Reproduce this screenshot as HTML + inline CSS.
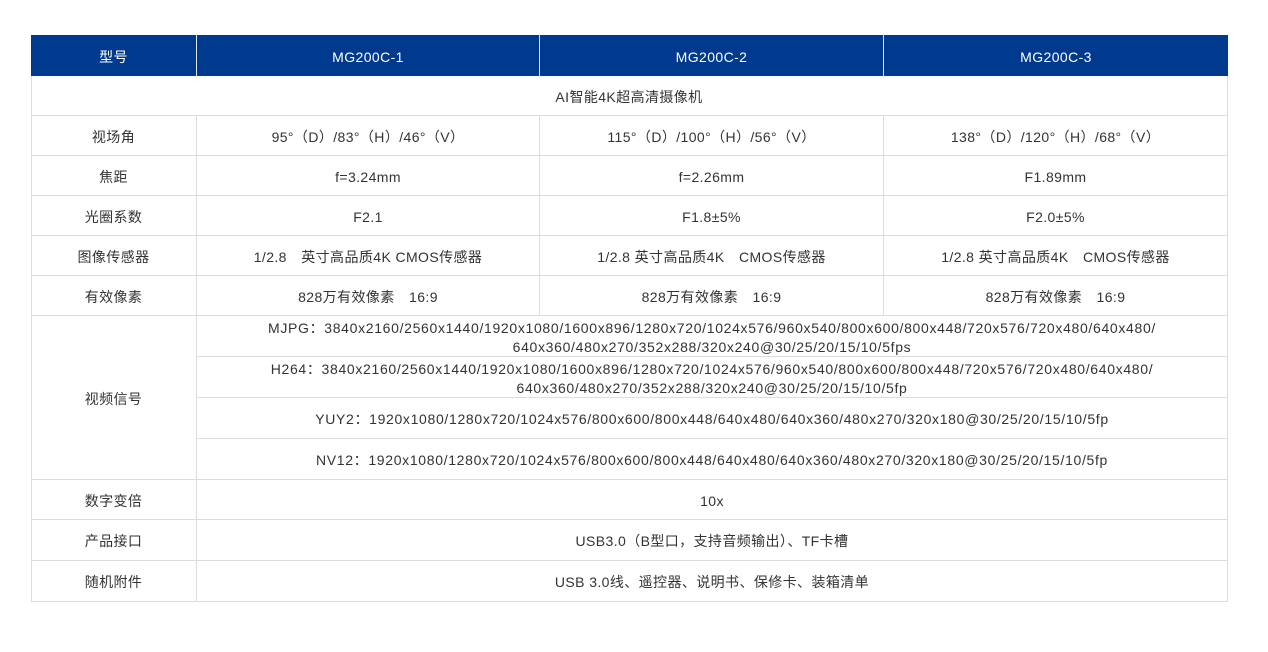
<!DOCTYPE html>
<html><head><meta charset="utf-8"><style>
body{margin:0;width:1268px;height:652px;background:#fff;font-family:"Liberation Sans","Noto Sans CJK SC",sans-serif;font-size:14px;color:#333;position:relative;overflow:hidden}
.c{position:absolute;display:flex;align-items:center;justify-content:center;text-align:center;box-sizing:border-box;border-right:1px solid #ddd;border-bottom:1px solid #ddd;white-space:nowrap;letter-spacing:0.4px;line-height:19px;padding-top:3px}
.h{background:#003a8f;color:#fff;border-right:1px solid #dfe6f2;border-bottom:none}
.w{letter-spacing:0.67px}
</style></head><body>
<div style="position:absolute;left:31px;top:35px;width:1197px;height:567px;border-left:1px solid #ddd;box-sizing:border-box"></div>
<div class="c h" style="left:31px;top:35px;width:166px;height:41px">型号</div>
<div class="c h" style="left:197px;top:35px;width:343px;height:41px">MG200C-1</div>
<div class="c h" style="left:540px;top:35px;width:344px;height:41px">MG200C-2</div>
<div class="c h" style="left:884px;top:35px;width:344px;height:41px;border-right:none">MG200C-3</div>

<div class="c" style="left:31px;top:76px;width:1197px;height:40px">AI智能4K超高清摄像机</div>

<div class="c" style="left:31px;top:116px;width:166px;height:40px">视场角</div>
<div class="c" style="left:197px;top:116px;width:343px;height:40px">95°（D）/83°（H）/46°（V）</div>
<div class="c" style="left:540px;top:116px;width:344px;height:40px">115°（D）/100°（H）/56°（V）</div>
<div class="c" style="left:884px;top:116px;width:344px;height:40px">138°（D）/120°（H）/68°（V）</div>

<div class="c" style="left:31px;top:156px;width:166px;height:40px">焦距</div>
<div class="c" style="left:197px;top:156px;width:343px;height:40px">f=3.24mm</div>
<div class="c" style="left:540px;top:156px;width:344px;height:40px">f=2.26mm</div>
<div class="c" style="left:884px;top:156px;width:344px;height:40px">F1.89mm</div>

<div class="c" style="left:31px;top:196px;width:166px;height:40px">光圈系数</div>
<div class="c" style="left:197px;top:196px;width:343px;height:40px">F2.1</div>
<div class="c" style="left:540px;top:196px;width:344px;height:40px">F1.8±5%</div>
<div class="c" style="left:884px;top:196px;width:344px;height:40px">F2.0±5%</div>

<div class="c" style="left:31px;top:236px;width:166px;height:40px">图像传感器</div>
<div class="c" style="left:197px;top:236px;width:343px;height:40px">1/2.8　英寸高品质4K CMOS传感器</div>
<div class="c" style="left:540px;top:236px;width:344px;height:40px">1/2.8 英寸高品质4K　CMOS传感器</div>
<div class="c" style="left:884px;top:236px;width:344px;height:40px">1/2.8 英寸高品质4K　CMOS传感器</div>

<div class="c" style="left:31px;top:276px;width:166px;height:40px">有效像素</div>
<div class="c" style="left:197px;top:276px;width:343px;height:40px">828万有效像素　16:9</div>
<div class="c" style="left:540px;top:276px;width:344px;height:40px">828万有效像素　16:9</div>
<div class="c" style="left:884px;top:276px;width:344px;height:40px">828万有效像素　16:9</div>

<div class="c" style="left:31px;top:316px;width:166px;height:164px">视频信号</div>
<div class="c w" style="left:197px;top:316px;width:1031px;height:41px">MJPG：3840x2160/2560x1440/1920x1080/1600x896/1280x720/1024x576/960x540/800x600/800x448/720x576/720x480/640x480/<br>640x360/480x270/352x288/320x240@30/25/20/15/10/5fps</div>
<div class="c w" style="left:197px;top:357px;width:1031px;height:41px">H264：3840x2160/2560x1440/1920x1080/1600x896/1280x720/1024x576/960x540/800x600/800x448/720x576/720x480/640x480/<br>640x360/480x270/352x288/320x240@30/25/20/15/10/5fp</div>
<div class="c w" style="left:197px;top:398px;width:1031px;height:41px">YUY2：1920x1080/1280x720/1024x576/800x600/800x448/640x480/640x360/480x270/320x180@30/25/20/15/10/5fp</div>
<div class="c w" style="left:197px;top:439px;width:1031px;height:41px">NV12：1920x1080/1280x720/1024x576/800x600/800x448/640x480/640x360/480x270/320x180@30/25/20/15/10/5fp</div>

<div class="c" style="left:31px;top:480px;width:166px;height:40px">数字变倍</div>
<div class="c" style="left:197px;top:480px;width:1031px;height:40px">10x</div>
<div class="c" style="left:31px;top:520px;width:166px;height:41px">产品接口</div>
<div class="c" style="left:197px;top:520px;width:1031px;height:41px">USB3.0（B型口，支持音频输出）、TF卡槽</div>
<div class="c" style="left:31px;top:561px;width:166px;height:41px">随机附件</div>
<div class="c" style="left:197px;top:561px;width:1031px;height:41px">USB 3.0线、遥控器、说明书、保修卡、装箱清单</div>
</body></html>
